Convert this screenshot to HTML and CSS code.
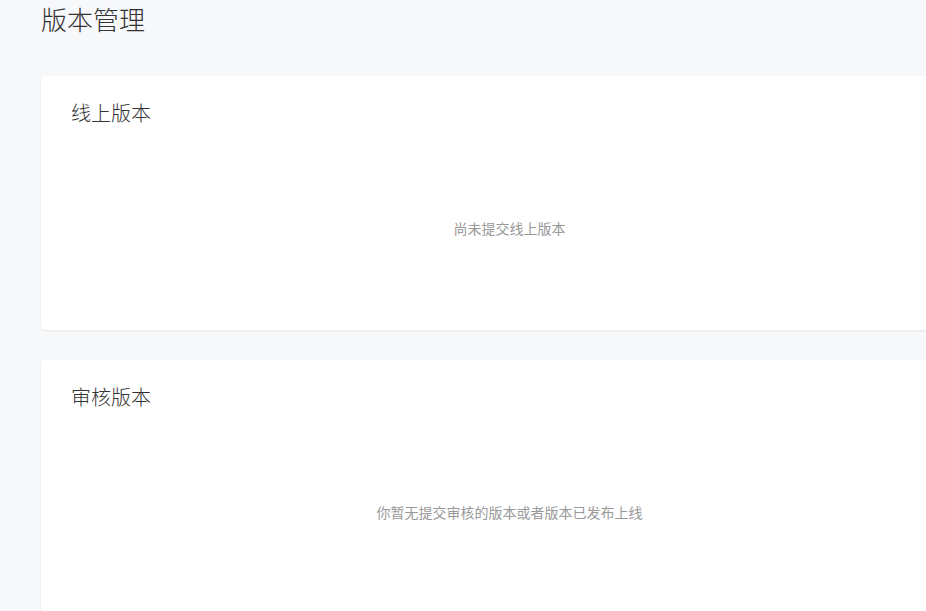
FILE: index.html
```html
<!DOCTYPE html>
<html lang="zh">
<head>
<meta charset="utf-8">
<title>版本管理</title>
<link rel="stylesheet" href="styles.css">
</head>
<body>
<div class="page">
  <h1 class="page-title">版本管理</h1>
  <section class="card">
    <h2 class="card-title">线上版本</h2>
    <div class="card-empty">尚未提交线上版本</div>
  </section>
  <section class="card">
    <h2 class="card-title">审核版本</h2>
    <div class="card-empty">你暂无提交审核的版本或者版本已发布上线</div>
  </section>
</div>
</body>
</html>
```
FILE: styles.css
```css
html, body {
  margin: 0;
  padding: 0;
  overflow: hidden;
  background: #f7f8fa;
}
body {
  font-family: "Noto Sans CJK SC", "Noto Sans", sans-serif;
  color: #333;
}
.page {
  padding: 0 0 0 41px;
  display: flex;
  flex-direction: column;
  gap: 30px;
  width: 937px;
}
.page-title {
  margin: 0 0 16px 0;
  font-size: 26px;
  font-weight: 300;
  line-height: 40px;
  height: 30px;
  position: relative;
  top: -1px;
  color: #333;
}
.card {
  background: #fff;
  border-radius: 4px;
  box-shadow: 0 1px 2px rgba(0, 0, 0, 0.08);
  padding: 23px 30px 2px 30px;
  height: 254px;
  box-sizing: border-box;
  display: flex;
  flex-direction: column;
}
.card-title {
  margin: 0;
  font-size: 20px;
  font-weight: 300;
  line-height: 28px;
  color: #333;
}
.card-empty {
  flex: 1;
  display: flex;
  align-items: center;
  justify-content: center;
  font-size: 14px;
  color: #999;
}
```
